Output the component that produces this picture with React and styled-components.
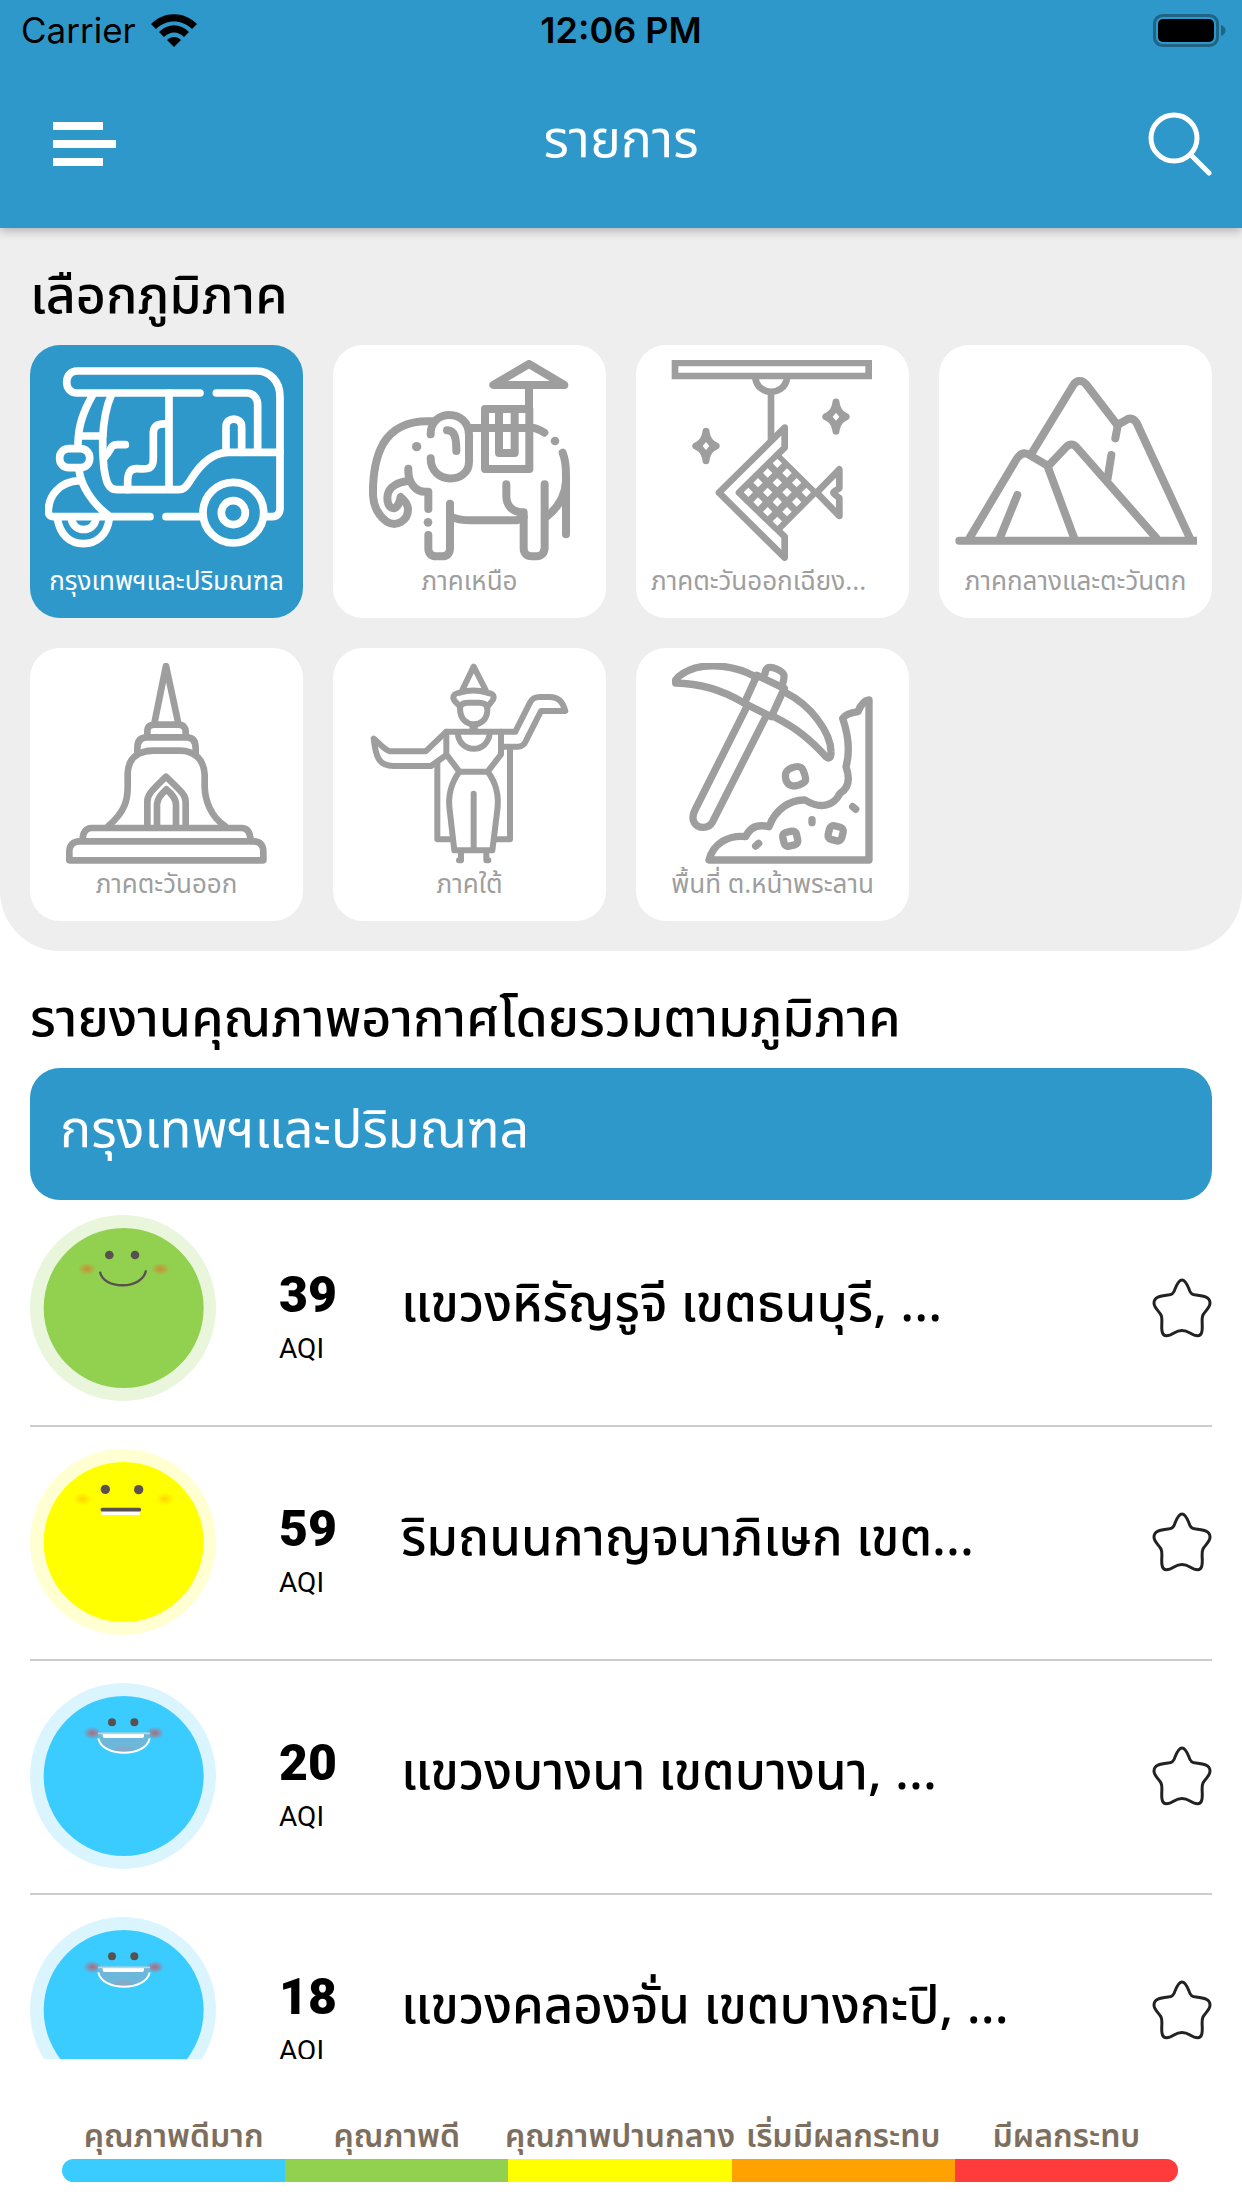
import React, { useState } from 'react';
import styled, { createGlobalStyle } from 'styled-components';

const GlobalStyle = createGlobalStyle`
* { box-sizing: border-box; }
body {
  margin: 0;
  background: #fff;
  color: #000;
  font-family: "Noto Sans Thai", "Noto Sans", Roboto, sans-serif;
}
button {
  font-family: inherit;
  border: 0;
  padding: 0;
  background: none;
}
`;
const Page = styled.div`
display: flex;
flex-direction: column;
height: 100vh;
overflow: hidden;
`;
const Header = styled.header`
position: relative;
flex: none;
background: #2f98ca;
box-shadow: 0 2px 10px rgba(0, 0, 0, 0.3);
`;
const StatusBar = styled.div`
display: grid;
grid-template-columns: 1fr auto 1fr;
align-items: center;
height: 60px;
padding: 0 16px;
font: 400 35px/60px Inter, sans-serif;
`;
const Carrier = styled.div`
display: flex;
align-items: center;
gap: 15px;
padding-left: 5px;
`;
const Clock = styled.div`
font-size: 36px;
font-weight: 600;
`;
const Battery = styled.svg`
justify-self: end;
`;
const NavBar = styled.div`
display: grid;
grid-template-columns: 1fr auto 1fr;
align-items: center;
height: 168px;
padding: 0 30px;
`;
const NavButton = styled.button`
display: flex;
height: 64px;
padding: 0 0 0 23px;
justify-self: ${(props) => props.$side};
`;
const Title = styled.h1`
margin: 0;
padding-bottom: 6px;
color: #fff;
font-size: 52px;
font-weight: 400;
line-height: 60px;
`;
const Regions = styled.section`
flex: none;
padding: 36px 30px 30px;
background: #eee;
border-radius: 0 0 60px 60px;
`;
const SectionTitle = styled.h2`
margin: 0;
font-size: 52px;
font-weight: 500;
line-height: 66px;
white-space: nowrap;
`;
const Grid = styled.div`
display: grid;
grid-template-columns: repeat(4, 1fr);
gap: 30px;
margin-top: 15px;
`;
const Tile = styled.button`
display: flex;
flex-direction: column;
min-width: 0;
aspect-ratio: 1;
padding: 15px;
border-radius: 30px;
background: ${(props) => (props.$active ? '#2f98ca' : '#fff')};
color: ${(props) => (props.$active ? '#fff' : '#9e9e9e')};
`;
const TileIcon = styled.svg`
width: 100%;
fill: none;
stroke: currentColor;
stroke-linecap: round;
stroke-linejoin: round;
`;
const TileLabel = styled.span`
width: 100%;
font-size: 26px;
line-height: 42px;
text-align: ${(props) => props.$align || 'center'};
white-space: nowrap;
`;
const Report = styled.section`
display: flex;
flex-direction: column;
flex: 1;
min-height: 0;
padding: 36px 30px 0;
`;
const Banner = styled.div`
flex: none;
margin-top: 15px;
padding: 0 30px 6px;
border-radius: 30px;
background: #2f98ca;
color: #fff;
font-size: 52px;
line-height: 126px;
`;
const Stations = styled.ul`
display: flex;
flex-direction: column;
flex: 1;
gap: 22px;
min-height: 0;
margin: 0;
padding: 15px 0 0;
overflow: hidden;
list-style: none;
`;
const Station = styled.li`
display: flex;
flex: none;
align-items: center;
padding-bottom: 24px;
border-bottom: 2px solid #cdcdcd;
`;
const Face = styled.svg`
flex: none;
width: 186px;
height: 186px;
`;
const Reading = styled.div`
flex: none;
width: 122px;
margin-left: 63px;
padding-top: 22px;
font-family: Roboto, sans-serif;
`;
const Value = styled.div`
font-size: 50px;
font-weight: 900;
line-height: 60px;
`;
const Unit = styled.div`
font-size: 28px;
line-height: 48px;
`;
const Place = styled.div`
flex: 1;
min-width: 0;
padding-bottom: 4px;
font-size: 51px;
font-weight: 500;
line-height: 66px;
white-space: nowrap;
`;
const StarButton = styled.button`
display: flex;
flex: none;
width: 60px;
height: 60px;
`;
const Legend = styled.footer`
display: grid;
grid-template-columns: repeat(5, minmax(0, 1fr));
flex: none;
padding: 57px 64px 26px 62px;
`;
const Level = styled.div`
display: flex;
flex-direction: column;
align-items: center;
color: #7d6e5e;
font-size: 32px;
font-weight: 600;
line-height: 43px;
white-space: nowrap;
&::after {
  content: '';
  align-self: stretch;
  height: 23px;
  background: ${(props) => props.$color};
}
&:first-child::after { border-radius: 12px 0 0 12px; }
&:last-child::after { border-radius: 0 12px 12px 0; }
`;

const TukTuk = () => (
  <TileIcon viewBox="75 75 729 603" strokeWidth="23">
    <path d="M540 174H171C151 174 140 159 140 141S152 108 171 108H710C750 108 780 140 780 185V520C780 537 770 545 757 545H735" />
    <path d="M589 174H680C700 174 713 190 713 210V352M780 352H620" />
    <path d="M618 352V275C618 245 665 245 665 275V352" />
    <path d="M620 352C575 355 540 390 515 430C500 455 492 464 475 464H290C265 464 258 440 252 400C247 360 247 345 248 310C250 270 256 220 274 180M447 174V464" />
    <path d="M218 180C190 230 175 270 174 325M185 303H248" />
    <rect x="119" y="341" width="90" height="57" rx="27" />
    <path d="M177 405C183 450 215 505 270 545M178 437C120 440 85 480 85 530C85 540 92 545 100 545H390M438 545H545" />
    <path d="M112 550C120 600 150 626 190 626S262 600 268 550M154 552C162 594 220 594 228 552" />
    <circle cx="640" cy="533" r="91" />
    <circle cx="640" cy="533" r="36" />
    <path d="M255 365C275 345 270 329 292 329H316M440 267C410 265 400 275 400 295V370C400 410 375 401 350 401C330 401 323 415 323 440V464" />
  </TileIcon>
);
const Elephant = () => (
  <TileIcon viewBox="69 75 729 603" strokeWidth="24">
    <path d="M322 259C240 255 200 285 175 325C150 370 143 420 144 480C146 520 165 545 185 560C215 578 250 556 249 522C248 508 237 494 227 486C224 502 217 518 207 520C190 518 185 500 188 480C192 455 220 441 248 438" />
    <path d="M250 401C248 440 270 475 310 470V522M310 600V640C310 655 318 664 333 664H352C367 664 375 655 375 640V506" />
    <path d="M378 545C395 555 420 556 440 556H575L596 545" />
    <path d="M317 298C315 220 432 220 432 300V380C432 448 317 450 317 370M366 286C390 286 394 310 394 348" />
    <path d="M435 279H628C640 283 650 287 658 293M713 353C722 375 723 395 723 420V598M723 440C720 490 690 525 665 545" />
    <path d="M659 448V635C659 655 650 664 635 664H620C605 664 596 655 596 640V532C560 532 545 510 544 485V448" />
    <path d="M480 222H613V402H480ZM522 222V354H569V222M612 222V150M612 87L505 150H718Z" />
    <g fill="currentColor" stroke="none">
      <circle cx="275" cy="335" r="14" />
      <circle cx="309" cy="562" r="13" />
      <circle cx="690" cy="318" r="13" />
    </g>
  </TileIcon>
);
const holes = [0, 1, 2, 3].flatMap((a) => [0, 1, 2, 3].map((b) => [442 + (b - a) * 29, 385 + (a + b) * 29]));
const Fish = () => (
  <TileIcon viewBox="63 75 729 603" strokeWidth="20">
    <path strokeLinejoin="miter" d="M135 84H716V123H135Z" />
    <path strokeLinecap="butt" d="M376 130C385 184 462 184 471 130M423 175V315" />
    <path d="M464 278L267 473L464 668V605L327 473L464 338Z" />
    <path fill="currentColor" strokeWidth="12" d="M445 360L560 473L445 588L327 473Z" />
    <path d="M560 473L628 403V460C616 468 610 470 610 473S616 480 628 489V543Z" />
    {[[618, 245], [228, 333]].map(([x, y]) => (
      <g key={x} fill="currentColor" stroke="none" transform={`translate(${x} ${y})`}>
        <path d="M-10 -47C-9 -57 9 -57 10 -47C13 -25 20 -16 36 -9C43 -5 43 5 36 9C20 16 13 25 10 47C9 57 -9 57 -10 47C-13 25 -20 16 -36 9C-43 5 -43 -5 -36 -9C-20 -16 -13 -25 -10 -47Z" />
        <path fill="#fff" d="M0 -12L10 0L0 12L-10 0Z" />
      </g>
    ))}
    <g fill="#fff" stroke="none">
      {holes.map(([x, y]) => <path key={`${x}-${y}`} d={`M${x} ${y - 14}l14 14l-14 14l-14 -14Z`} />)}
    </g>
  </TileIcon>
);
const Mountains = () => (
  <TileIcon viewBox="72 75 729 603" strokeWidth="24">
    <path d="M88 617H801M118 610L258 375C268 358 280 350 295 358L355 393L408 337C418 326 430 326 440 337L680 610" />
    <path d="M305 355L430 150C440 134 458 134 470 150L562 270L590 254C602 248 612 252 620 264L780 610" />
    <path d="M562 278L556 310M544 360L533 430M262 480L210 608M355 400L432 608" />
  </TileIcon>
);
const Stupa = () => (
  <TileIcon viewBox="75 69 729 603" strokeWidth="20">
    <path d="M403 250L438 78L475 250M382 290V275C382 260 390 254 405 254H475C490 254 497 262 497 275V290" />
    <path d="M352 340V325C352 302 362 292 380 292H500C520 292 527 305 527 325V340" />
    <path d="M265 558C315 515 323 480 323 440V400C325 350 360 332 400 332H480C525 332 552 360 554 405V440C555 480 572 530 615 558" />
    <path d="M382 560V485C382 465 390 457 438 410C485 455 497 465 497 485V560M411 560V493C413 472 425 462 439 448C455 462 468 475 468 495V560" />
    <path d="M188 600C188 575 200 564 215 564H665C680 564 690 575 692 600M148 661V635C148 615 160 604 178 604H702C720 604 730 615 730 635V661Z" />
  </TileIcon>
);
const Dancer = () => (
  <TileIcon viewBox="69 69 729 603" strokeWidth="18">
    <path d="M412 150L446 80L482 150M405 200C400 190 385 185 385 173C386 160 395 160 405 158C430 150 460 150 486 158C498 160 506 162 506 173C505 185 492 190 488 200" />
    <path d="M405 205C405 190 420 188 430 188H462C480 188 487 195 487 210C487 240 465 253 446 253S405 240 405 205Z" />
    <path strokeWidth="25" strokeLinecap="butt" d="M446 255V278" />
    <path d="M571 275L615 188C622 174 630 171 645 171H672C705 171 714 190 721 213H648L605 298C598 315 592 320 580 320H535M571 275H364L302 334H195C178 330 162 308 146 296C152 348 160 378 205 378H318L364 345" />
    <path d="M364 275V343L403 395H488L528 343V275M398 280C405 342 488 342 494 280" />
    <path d="M403 395C370 440 370 480 374 510L388 631H502L517 510C522 470 515 430 488 395M446 461V631" />
    <path d="M337 370V598H380M555 325V598H512M408 638V661H402M484 638V661H490" />
  </TileIcon>
);
const Pickaxe = () => (
  <TileIcon viewBox="63 69 729 603" strokeWidth="22">
    <path d="M372 108C310 75 240 72 195 84C165 94 145 108 137 120V129C210 130 280 152 340 188" />
    <path d="M343 190L381 106L463 145L424 230ZM405 100C408 80 420 78 440 87C465 98 466 105 457 135" />
    <path d="M470 160C540 195 602 275 603 335C604 354 597 358 588 350C540 298 500 265 435 232M348 205L195 510C180 540 195 562 220 562C232 562 242 556 248 545L405 235" />
    <path d="M237 660H717V180C703 182 692 194 684 215C665 218 645 225 638 235C655 285 662 330 648 380C662 420 655 445 630 460C610 500 570 508 525 480C480 478 435 510 417 560C385 552 360 560 347 590C295 585 250 610 237 660Z" />
    <path d="M484 384C505 376 514 378 520 392C532 424 528 426 510 434C490 442 474 438 468 420C464 402 466 392 484 384Z" />
    <rect x="460" y="575" width="42" height="42" rx="12" transform="rotate(-13 481 597)" />
    <rect x="596" y="559" width="42" height="42" rx="12" transform="rotate(14 617 580)" />
    <path d="M546 539V548M377 618L386 610M668 500L677 508" />
  </TileIcon>
);

const Shade = ({ id, color, xs, y }) => (
  <>
    <radialGradient id={id}>
      <stop offset="0" stopColor={color} stopOpacity="0.7" />
      <stop offset="1" stopColor={color} stopOpacity="0" />
    </radialGradient>
    {xs.map((x) => <ellipse key={x} cx={x} cy={y} rx="28" ry="19" fill={`url(#${id})`} />)}
  </>
);
const faces = {
  good: {
    color: '#92d14f',
    halo: '#e9f6dc',
    features: (
      <>
        <Shade id="blush-good" color="#e0702c" xs={[171, 391]} y={162} />
        <g fill="#595050"><circle cx="238" cy="120" r="13" /><circle cx="315" cy="120" r="13" /></g>
        <path d="M210 170C218 225 338 225 348 166" fill="none" stroke="#595050" strokeWidth="7" />
      </>
    ),
  },
  moderate: {
    color: '#ffff00',
    halo: '#ffffd2',
    features: (
      <>
        <Shade id="blush-moderate" color="#ffc400" xs={[158, 404]} y={150} />
        <g fill="#595050"><circle cx="226" cy="121" r="14" /><circle cx="326" cy="122" r="14" /></g>
        <path d="M214 187H330V198H214Z" fill="#fff" />
        <path d="M217 182H328" stroke="#595050" strokeWidth="11" strokeLinecap="round" />
      </>
    ),
  },
  excellent: {
    color: '#3bccff',
    halo: '#dbf5ff',
    features: (
      <>
        <Shade id="blush-excellent" color="#e83b3b" xs={[187, 375]} y={150} />
        <g fill="#595050"><circle cx="246" cy="118" r="12" /><circle cx="313" cy="118" r="12" /></g>
        <path d="M204 150H360C360 230 204 230 204 150Z" fill="#6cb7da" />
        <path d="M250 200C265 187 298 187 310 200C292 208 268 208 250 200Z" fill="#86a9c6" />
        <path d="M218 153H342V158Q342 165 334 165H226Q218 165 218 158Z" fill="#fff" />
        <path d="M205 166C216 224 348 224 359 166" fill="none" stroke="#fff" strokeWidth="6" />
        <path d="M204 151H360" stroke="#cfcfcf" strokeWidth="5" />
      </>
    ),
  },
};

const regions = [
  { name: 'กรุงเทพฯและปริมณฑล', Icon: TukTuk },
  { name: 'ภาคเหนือ', Icon: Elephant },
  { name: 'ภาคตะวันออกเฉียง...', Icon: Fish, align: 'left' },
  { name: 'ภาคกลางและตะวันตก', Icon: Mountains },
  { name: 'ภาคตะวันออก', Icon: Stupa },
  { name: 'ภาคใต้', Icon: Dancer },
  { name: 'พื้นที่ ต.หน้าพระลาน', Icon: Pickaxe },
];
const stations = [
  { aqi: 39, face: 'good', place: 'แขวงหิรัญรูจี เขตธนบุรี, ...' },
  { aqi: 59, face: 'moderate', place: 'ริมถนนกาญจนาภิเษก เขต...' },
  { aqi: 20, face: 'excellent', place: 'แขวงบางนา เขตบางนา, ...' },
  { aqi: 18, face: 'excellent', place: 'แขวงคลองจั่น เขตบางกะปิ, ...' },
];
const levels = [
  ['คุณภาพดีมาก', '#3bccff'],
  ['คุณภาพดี', '#92d14f'],
  ['คุณภาพปานกลาง', '#ffff00'],
  ['เริ่มมีผลกระทบ', '#ffa200'],
  ['มีผลกระทบ', '#ff3b3b'],
];

const App = () => {
  const [selected, setSelected] = useState(0);

  return (
    <Page>
      <GlobalStyle />
      <Header>
        <StatusBar>
          <Carrier>
            Carrier
            <svg width="46" height="33" viewBox="0 0 46 33">
              <path d="M0 10C13 -3 33 -3 46 10L41 15C31 5 15 5 5 15Z" />
              <path d="M8 18C17 9 29 9 38 18L33 23C27 17 19 17 13 23Z" />
              <path d="M16 26C20 22 26 22 30 26L23 33Z" />
            </svg>
          </Carrier>
          <Clock>12:06 PM</Clock>
          <Battery width="73" height="33" viewBox="0 0 73 33">
            <rect x="1.5" y="1.5" width="63" height="30" rx="8" fill="none" stroke="#1f6385" strokeWidth="3" />
            <rect x="5" y="5" width="56" height="23" rx="5" />
            <path d="M68 11C74 13 74 20 68 22Z" fill="#1f6385" />
          </Battery>
        </StatusBar>
        <NavBar>
          <NavButton $side="start" aria-label="เมนู">
            <svg width="64" height="64" fill="#fff">
              <path d="M0 10H50V18H0ZM0 28H63V36H0ZM0 46H50V54H0Z" />
            </svg>
          </NavButton>
          <Title>รายการ</Title>
          <NavButton $side="end" aria-label="ค้นหา">
            <svg width="64" height="64" fill="none" stroke="#fff" strokeWidth="5" strokeLinecap="round">
              <circle cx="26" cy="26" r="23" />
              <path d="M43 43L61 61" />
            </svg>
          </NavButton>
        </NavBar>
      </Header>
      <Regions>
        <SectionTitle>เลือกภูมิภาค</SectionTitle>
        <Grid>
          {regions.map(({ name, Icon, align }, i) => (
            <Tile key={name} $active={i === selected} onClick={() => setSelected(i)}>
              <Icon />
              <TileLabel $align={align}>{name}</TileLabel>
            </Tile>
          ))}
        </Grid>
      </Regions>
      <Report>
        <SectionTitle>รายงานคุณภาพอากาศโดยรวมตามภูมิภาค</SectionTitle>
        <Banner>{regions[selected].name}</Banner>
        <Stations>
          {stations.map(({ aqi, face, place }) => (
            <Station key={place}>
              <Face viewBox="0 0 558 558">
                <circle cx="279" cy="279" r="279" fill={faces[face].halo} />
                <circle cx="281" cy="279" r="240" fill={faces[face].color} />
                {faces[face].features}
              </Face>
              <Reading>
                <Value>{aqi}</Value>
                <Unit>AQI</Unit>
              </Reading>
              <Place>{place}</Place>
              <StarButton aria-label="รายการโปรด">
                <svg width="60" height="60" fill="none" stroke="#222" strokeWidth="3">
                  <path d="M30 2C33 2 35 6 37 11C38 15 40 17 44 17C52 18 58 19 58 25C58 30 53 33 51 37C49 41 51 47 50 53C49 60 43 58 38 55C33 52 27 52 22 55C17 58 11 60 10 53C9 47 11 41 9 37C7 33 2 30 2 25C2 19 8 18 16 17C20 17 22 15 23 11C25 6 27 2 30 2Z" />
                </svg>
              </StarButton>
            </Station>
          ))}
        </Stations>
      </Report>
      <Legend>
        {levels.map(([label, color]) => <Level key={label} $color={color}>{label}</Level>)}
      </Legend>
    </Page>
  );
};
export default App;
